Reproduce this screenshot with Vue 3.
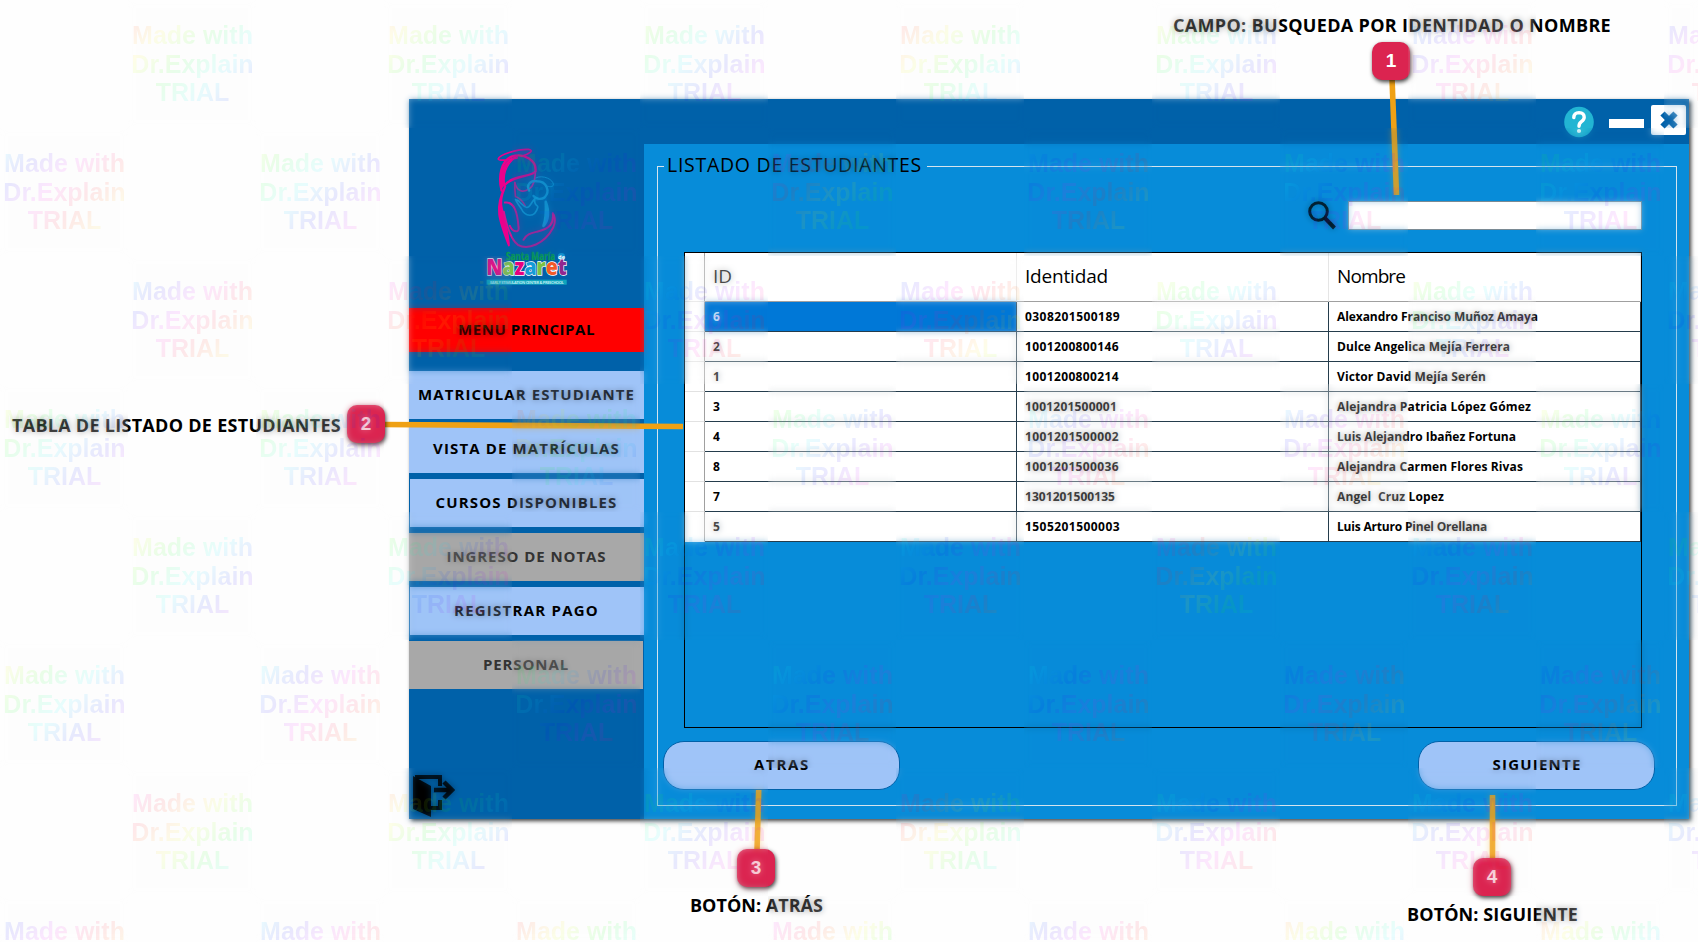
<script setup>
// Stretches or tightens letter spacing until a caption fills the given width
const vFit = {
  mounted(el, { value }) {
    const natural = el.getBoundingClientRect().width
    el.style.letterSpacing = (value - natural) / el.textContent.length + 'px'
  }
}

const menu = [
  { label: 'MATRICULAR ESTUDIANTE', w: 217 },
  { label: 'VISTA DE MATRÍCULAS', w: 187 },
  { label: 'CURSOS DISPONIBLES', w: 182, inset: true },
  { label: 'INGRESO DE NOTAS', w: 160, off: true },
  { label: 'REGISTRAR PAGO', w: 145, inset: true },
  { label: 'PERSONAL', w: 86, off: true }
]

const rows = [
  ['6', '0308201500189', 'Alexandro Franciso Muñoz Amaya', 95, 201],
  ['2', '1001200800146', 'Dulce Angelica Mejía Ferrera', 94, 173],
  ['1', '1001200800214', 'Victor David Mejía Serén', 94, 149],
  ['3', '1001201500001', 'Alejandra Patricia López Gómez', 92, 194],
  ['4', '1001201500002', 'Luis Alejandro Ibañez Fortuna', 94, 179],
  ['8', '1001201500036', 'Alejandra Carmen Flores Rivas', 94, 186],
  ['7', '1301201500135', 'Angel  Cruz Lopez', 90, 107],
  ['5', '1505201500003', 'Luis Arturo Pinel Orellana', 95, 150]
]

// First hue of each watermark, row by row
const hues = [
  [5, 30, 80, 350, 60, 190, 230],
  [190, 80, 100, 280, 200, 130, 110],
  [190, 290, 150, 220, 60, 70, 160],
  [60, 75, 0, 90, 160, 190, 60],
  [50, 100, 130, 160, 290, 170, 100],
  [50, 170, 110, 150, 160, 210, 210],
  [300, 15, 100, 310, 140, 150, 150],
  [215, 185, 350, 290, 200, 20, 10]
]
const tiles = []
for (let r = 0; r < 8; r++) {
  for (let c = 0; c < 14; c++) {
    tiles.push((r + c) % 2 ? { hue: hues[r][c >> 1] } : null)
  }
}
function rainbow(h) {
  const stops = []
  for (let i = 0; i <= 12; i++) stops.push(`hsl(${h - 30 + i * 27} 100% 50%)`)
  return { backgroundImage: `linear-gradient(135deg, ${stops.join(', ')})` }
}
</script>

<template>
  <main class="page">
    <section class="window">
      <header class="titlebar">
        <svg class="help" viewBox="0 0 30 32">
          <ellipse cx="15" cy="16" rx="14.8" ry="15.3" fill="#22b5d3" />
          <path d="M9.8 11.6Q10 6.6 15 6.6Q20.2 6.8 20.2 11.3Q20.2 13.7 17.4 15.7Q15 17.4 15 20.2" fill="none" stroke="#fff" stroke-width="3.4" stroke-linecap="round" />
          <circle cx="15" cy="25" r="2.1" fill="#fff" />
        </svg>
        <span class="minimize"></span>
        <span class="close">
          <svg viewBox="0 0 18 18" width="18" height="18">
            <path d="M2.500 2.500L15.500 15.500M15.500 2.500L2.500 15.500" stroke="#0061a9" stroke-width="6" />
          </svg>
        </span>
      </header>
      <div class="body">
        <aside class="side">
          <svg class="logo" viewBox="250 165 260 430">
            <g fill="none" stroke="#ec008c" stroke-linecap="round" stroke-linejoin="round">
              <path d="M352 204C325 211 294 213 295 207C298 195 350 177 386 178C405 181 387 193 365 199" stroke-width="5" />
              <path d="M305 302C294 258 305 212 335 200C372 187 411 212 407 244C400 261 340 254 314 286" stroke-width="7" />
              <path d="M303 296C297 245 312 212 352 199C318 222 309 250 314 284Z" stroke-width="4" fill="#ec008c" />
              <path d="M345 278C352 309 374 307 388 297C404 286 405 266 407 244" stroke-width="5" stroke="#c4209a" />
              <path d="M316 290C283 352 297 390 327 467C326 426 310 384 304 345C302 316 312 303 316 290" stroke-width="6" fill="#ec008c" />
              <path d="M345 278C344 297 345 305 347 320C362 325 370 336 376 348" stroke-width="5" stroke="#b02592" />
              <path d="M315 338C344 334 353 370 356 411C360 431 339 428 330 408M312 366C321 412 333 449 354 465C384 482 434 463 460 414C471 391 462 374 459 370C463 401 450 417 414 425C394 430 380 432 371 450" stroke-width="6" stroke="#d01593" />
            </g>
            <g fill="none" stroke="#159bd7" stroke-linecap="round" stroke-linejoin="round">
              <path d="M388 302C379 287 390 270 412 274C440 274 452 304 435 322C422 332 405 325 401 318" stroke-width="7" />
              <path d="M408 264C429 253 462 269 461 285C459 292 448 291 440 288" stroke-width="3" />
              <path d="M347 329C361 332 367 350 381 353C390 354 394 338 405 326C401 347 416 347 414 352C405 386 375 381 364 356C358 346 351 340 347 329" stroke-width="5" />
              <path d="M438 336C449 365 446 394 431 408C440 385 439 355 438 336" stroke-width="8" />
            </g>
            <text x="318" y="511" font-size="30" textLength="148" lengthAdjust="spacingAndGlyphs" fill="#0b9b53" stroke="#0b9b53" stroke-width="1" font-weight="700">Santa María</text>
            <circle cx="485" cy="501" r="11" fill="#159bd7" />
            <text x="475" y="507" font-size="17" fill="#fff" font-weight="700">de</text>
            <text class="brand" x="259" y="557" font-size="67" textLength="242" lengthAdjust="spacingAndGlyphs"><tspan fill="#e6007e">N</tspan><tspan fill="#7ac143">a</tspan><tspan fill="#e6007e">z</tspan><tspan fill="#159bd7">a</tspan><tspan fill="#7ac143">r</tspan><tspan fill="#f15a29">e</tspan><tspan fill="#92278f">t</tspan></text>
            <rect x="260" y="570" width="241" height="15" fill="#10a5bd" />
            <text x="270" y="582" font-size="12" textLength="222" fill="#b9ebf2">EARLY STIMULATION CENTER &amp; PRESCHOOL</text>
          </svg>
          <div class="menu-title"><span v-fit="137">MENU PRINCIPAL</span></div>
          <nav class="menu">
            <div v-for="m in menu" :key="m.label" class="item" :class="{ off: m.off, inset: m.inset }">
              <span v-fit="m.w">{{ m.label }}</span>
            </div>
          </nav>
          <svg class="exit" viewBox="0 0 42 42">
            <path d="M0 1L18 11V42L0 34Z" />
            <path d="M2 2H27V11M27 25V33H18" fill="none" stroke="#000" stroke-width="4" />
            <path d="M21 15H37M31 7L39 15L31 23" fill="none" stroke="#000" stroke-width="4.5" />
          </svg>
        </aside>
        <div class="content">
          <fieldset class="group">
            <legend><span v-fit="255">LISTADO DE ESTUDIANTES</span></legend>
            <div class="search">
              <svg viewBox="0 0 28 29" width="28" height="29">
                <circle cx="10.5" cy="10.5" r="8.8" fill="none" stroke="#000" stroke-width="3" />
                <path d="M17 17.200L26.500 27" stroke="#000" stroke-width="4" />
              </svg>
              <div class="field"></div>
            </div>
            <div class="grid">
              <div class="row head">
                <div class="mark"></div>
                <div class="cell"><span v-fit="19">ID</span></div>
                <div class="cell"><span v-fit="83">Identidad</span></div>
                <div class="cell"><span v-fit="68">Nombre</span></div>
              </div>
              <div v-for="(r, i) in rows" :key="r[0]" class="row">
                <div class="mark"></div>
                <div class="cell" :class="{ picked: i === 0 }"><span>{{ r[0] }}</span></div>
                <div class="cell"><span v-fit="r[3]">{{ r[1] }}</span></div>
                <div class="cell"><span v-fit="r[4]">{{ r[2] }}</span></div>
              </div>
            </div>
            <footer class="pager">
              <div class="pill"><span v-fit="56">ATRAS</span></div>
              <div class="pill"><span v-fit="89">SIGUIENTE</span></div>
            </footer>
          </fieldset>
        </div>
      </div>
    </section>

    <svg class="leaders" viewBox="0 0 1698 942">
      <g stroke="#efa114" stroke-width="5.6">
        <path d="M1392 78L1396.500 195" />
        <path d="M383 424.500L683 426.500" />
        <path d="M758.700 790L757 851" />
        <path d="M1492.500 795V860" />
      </g>
    </svg>
    <b class="badge b1">1</b>
    <b class="badge b2">2</b>
    <b class="badge b3">3</b>
    <b class="badge b4">4</b>
    <span class="note n1" v-fit="438">CAMPO: BUSQUEDA POR IDENTIDAD O NOMBRE</span>
    <span class="note n2" v-fit="329">TABLA DE LISTADO DE ESTUDIANTES</span>
    <span class="note n3" v-fit="133">BOTÓN: ATRÁS</span>
    <span class="note n4" v-fit="171">BOTÓN: SIGUIENTE</span>

    <div class="trial">
      <div v-for="(t, i) in tiles" :key="i" class="tile">
        <template v-if="t">
          <div class="haze"></div>
          <div class="stamp" :style="rainbow(t.hue)">Made with<br />Dr.Explain<br />TRIAL</div>
        </template>
      </div>
    </div>
  </main>
</template>

<style>
body {
  margin: 0;
  background: #fefefe;
}
</style>

<style scoped>
.page {
  position: relative;
  width: 1698px;
  height: 942px;
  overflow: hidden;
  box-sizing: border-box;
  padding: 99px 0 0 409px;
  background: #fefefe;
  font-family: "Open Sans", "Noto Sans", sans-serif;
  color: #000;
}
.page span {
  white-space: pre;
}
.window {
  width: 1280px;
  height: 720px;
  display: flex;
  flex-direction: column;
  background: #0061a9;
  box-shadow: 2px 2px 4px rgba(0, 0, 0, 0.75);
}
.titlebar {
  height: 45px;
  box-sizing: border-box;
  padding: 6px 3px 0 0;
  display: flex;
  justify-content: flex-end;
}
.help {
  width: 30px;
  height: 32px;
  margin: 1px 15px 0 0;
}
.minimize {
  width: 35px;
  height: 9px;
  margin: 14px 7px 0 0;
  background: #fff;
}
.close {
  width: 35px;
  height: 30px;
  border-radius: 2px;
  background: #fff;
  display: flex;
  align-items: center;
  justify-content: center;
}
.body {
  flex: 1;
  display: flex;
}
.side {
  width: 235px;
  display: flex;
  flex-direction: column;
  font-size: 15px;
  font-weight: 700;
}
.logo {
  width: 87px;
  height: 143px;
  margin: 1px 0 20px 74px;
  font-family: "Open Sans", sans-serif;
}
.brand {
  font-weight: 800;
  stroke: #fff;
  stroke-width: 4px;
  paint-order: stroke;
}
.menu-title {
  height: 44px;
  box-sizing: border-box;
  padding-bottom: 2px;
  background: #f00;
  display: flex;
  align-items: center;
  justify-content: center;
}
.menu {
  margin-top: 19px;
  display: flex;
  flex-direction: column;
  gap: 6px;
}
.item {
  height: 48px;
  box-sizing: border-box;
  padding-bottom: 2px;
  display: flex;
  align-items: center;
  justify-content: center;
  background: #9fc4f8;
}
.item.inset {
  margin-left: 1px;
  padding-right: 1px;
}
.item.off {
  background: #a8a8a8;
  color: #333;
}
.item:last-child {
  margin-right: 1px;
}
.exit {
  width: 42px;
  height: 42px;
  margin: 86px 0 0 4px;
}
.content {
  flex: 1;
  background: #078cd9;
  box-sizing: border-box;
  padding: 7px 12px 13px 13px;
}
.group {
  box-sizing: border-box;
  width: 1020px;
  height: 655px;
  margin: 0;
  padding: 0;
  border: 1px solid #d4e4ee;
}
legend {
  height: 30px;
  margin-left: 6px;
  padding: 0 5px 0 3px;
  font-size: 19.5px;
  line-height: 28px;
}
.search {
  display: flex;
  gap: 12px;
  justify-content: flex-end;
  margin: 20px 34px 0 0;
}
.field {
  width: 294px;
  height: 29px;
  box-sizing: border-box;
  background: #fff;
  border: 1px solid #7a8a94;
}
.grid {
  width: 958px;
  height: 476px;
  box-sizing: border-box;
  margin: 22px 0 0 26px;
  border: 1px solid #000;
}
.row {
  display: grid;
  grid-template-columns: 20px 312px 312px 312px;
  height: 30px;
  background: #fff;
  font-size: 12px;
  font-weight: 700;
}
.mark,
.cell {
  box-sizing: border-box;
}
.mark {
  border-right: 1px solid #a0a0a0;
  border-bottom: 1px solid #e2e2e2;
}
.cell {
  display: flex;
  align-items: center;
  padding-left: 8px;
  border-right: 1px solid #243c4c;
  border-bottom: 1px solid #243c4c;
}
.cell.picked {
  background: #0078d7;
  color: #fff;
}
.row:last-child .mark {
  border-bottom-color: #fff;
}
.row.head {
  height: 49px;
  font-size: 19px;
  font-weight: 400;
}
.head .cell {
  padding-bottom: 2px;
  border-right-color: #e5e5e5;
  border-bottom-color: #a0a0a0;
}
.pager {
  display: flex;
  justify-content: space-between;
  padding: 13px 21px 0 5px;
}
.pill {
  width: 237px;
  height: 49px;
  box-sizing: border-box;
  padding: 0 0 3px 1px;
  border: 1px solid #0061a9;
  border-radius: 21px;
  background: #9fc4f8;
  display: flex;
  align-items: center;
  justify-content: center;
  font-size: 15px;
  font-weight: 700;
}
.leaders {
  position: absolute;
  inset: 0;
  width: 1698px;
  height: 942px;
}
.badge {
  position: absolute;
  width: 38px;
  height: 38px;
  border-radius: 10px;
  background: #db2450;
  color: #fff;
  box-shadow: 1px 2px 4px rgba(0, 0, 0, 0.75);
  font: 700 19px/38px "Liberation Sans", Arial, sans-serif;
  text-align: center;
}
.b1 { left: 1372px; top: 42px; }
.b2 { left: 347px; top: 405px; }
.b3 { left: 737px; top: 849px; }
.b4 { left: 1473px; top: 858px; }
.note {
  position: absolute;
  font-size: 18px;
  line-height: 24px;
  font-weight: 700;
}
.n1 { left: 1173px; top: 13px; }
.n2 { left: 12px; top: 413px; }
.n3 { left: 690px; top: 893px; }
.n4 { left: 1407px; top: 902px; }
.trial {
  position: absolute;
  left: 0;
  top: 0;
  width: 1792px;
  display: grid;
  grid-template-columns: repeat(14, 128px);
  grid-auto-rows: 128px;
}
.tile {
  display: grid;
}
.haze,
.stamp {
  grid-area: 1 / 1;
}
.haze {
  opacity: 0.36;
  backdrop-filter: blur(3px);
}
.stamp {
  padding: 21px 0 0 1px;
  text-align: center;
  font: 700 25px/28.5px "Liberation Sans", Arial, sans-serif;
  white-space: nowrap;
  color: transparent;
  background-clip: text;
  -webkit-background-clip: text;
  opacity: 0.085;
}
</style>
